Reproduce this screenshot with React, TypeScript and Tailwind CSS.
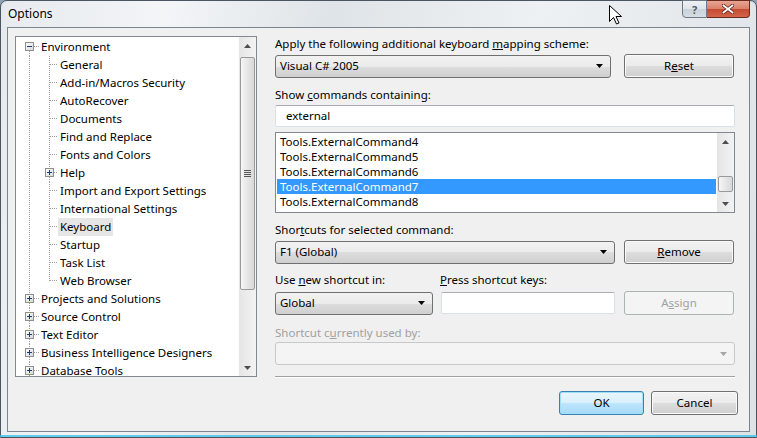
import React from "react";

const FONT = "font-['Noto_Sans',sans-serif]";

const Arrow = ({ dir, color = "#000" }: { dir: "up" | "down"; color?: string }) => (
  <svg width="7" height="4" viewBox="0 0 7 4" className="block">
    {dir === "down" ? (
      <path d="M0 0h7L3.5 4z" fill={color} />
    ) : (
      <path d="M0 4h7L3.5 0z" fill={color} />
    )}
  </svg>
);

const ComboBox = ({
  value,
  className,
  disabled,
}: {
  value?: string;
  className: string;
  disabled?: boolean;
}) => (
  <div
    className={`${className} h-[23px] rounded-[3px] border flex items-center justify-between pl-[4px] pr-[7px] ${
      disabled
        ? "border-[#c6c8ca] bg-[#f4f4f4]"
        : "border-[#707070] bg-[linear-gradient(to_bottom,#f2f2f2_0%,#ebebeb_50%,#dddddd_50%,#cfcfcf_100%)]"
    }`}
  >
    <span className="leading-none">{value}</span>
    <Arrow dir="down" color={disabled ? "#a6a6a6" : "#000"} />
  </div>
);

const Button = ({
  children,
  className,
  disabled,
  primary,
}: {
  children: React.ReactNode;
  className: string;
  disabled?: boolean;
  primary?: boolean;
}) => (
  <div
    className={`${className} h-[24px] rounded-[3px] border flex items-center justify-center ${
      disabled
        ? "border-[#adb2b5] bg-[#f4f4f4] text-[#a0a0a0]"
        : primary
        ? "border-[#3c7fb1] bg-[linear-gradient(to_bottom,#eaf6fd_0%,#d9f0fc_50%,#bee6fd_50%,#a7d9f5_100%)] shadow-[inset_0_0_0_1px_#9ee0fb]"
        : "border-[#707070] bg-[linear-gradient(to_bottom,#f2f2f2_0%,#ebebeb_50%,#dddddd_50%,#cfcfcf_100%)] shadow-[inset_0_0_0_1px_#fbfbfb]"
    }`}
  >
    {children}
  </div>
);

const TextBox = ({ value, className }: { value?: string; className: string }) => (
  <div
    className={`${className} h-[22px] rounded-[2px] border border-[#dbdfe6] border-t-[#abadb3] bg-white flex items-center pl-[10px]`}
  >
    {value}
  </div>
);

const ScrollBar = ({ thumbTop, thumbHeight, grip }: { thumbTop: number; thumbHeight: number; grip?: boolean }) => (
  <div className="w-[17px] h-full flex flex-col bg-[linear-gradient(to_right,#e5e5e5,#f3f3f3)]">
    <div className="h-[17px] flex items-center justify-center">
      <Arrow dir="up" color="#4d4d4d" />
    </div>
    <div className="flex-1 flex flex-col">
      <div style={{ height: thumbTop }} />
      <div
        className="mx-[1px] rounded-[2px] border border-[#9a9a9a] bg-[linear-gradient(to_right,#f5f5f5,#e6e6e6_50%,#d9d9d9)] flex items-center justify-center"
        style={{ height: thumbHeight }}
      >
        {grip && (
          <div className="flex flex-col gap-[1px]">
            <div className="w-[7px] h-[1px] bg-[#555]" />
            <div className="w-[7px] h-[1px] bg-[#555]" />
            <div className="w-[7px] h-[1px] bg-[#555]" />
            <div className="w-[7px] h-[1px] bg-[#555]" />
          </div>
        )}
      </div>
    </div>
    <div className="h-[17px] flex items-center justify-center">
      <Arrow dir="down" color="#4d4d4d" />
    </div>
  </div>
);

type Node = {
  label: string;
  level: 0 | 1;
  expander?: "plus" | "minus";
  first?: boolean;
  lastChild?: boolean;
  selected?: boolean;
};

const nodes: Node[] = [
  { label: "Environment", level: 0, expander: "minus", first: true },
  { label: "General", level: 1 },
  { label: "Add-in/Macros Security", level: 1 },
  { label: "AutoRecover", level: 1 },
  { label: "Documents", level: 1 },
  { label: "Find and Replace", level: 1 },
  { label: "Fonts and Colors", level: 1 },
  { label: "Help", level: 1, expander: "plus" },
  { label: "Import and Export Settings", level: 1 },
  { label: "International Settings", level: 1 },
  { label: "Keyboard", level: 1, selected: true },
  { label: "Startup", level: 1 },
  { label: "Task List", level: 1 },
  { label: "Web Browser", level: 1, lastChild: true },
  { label: "Projects and Solutions", level: 0, expander: "plus" },
  { label: "Source Control", level: 0, expander: "plus" },
  { label: "Text Editor", level: 0, expander: "plus" },
  { label: "Business Intelligence Designers", level: 0, expander: "plus" },
  { label: "Database Tools", level: 0, expander: "plus" },
];

const Expander = ({ x, kind }: { x: number; kind: "plus" | "minus" }) => (
  <g>
    <rect x={x + 0.5} y={4.5} width={8} height={8} fill="url(#exp)" stroke="#8f8f8f" />
    <path d={`M${x + 2} 8.5h5`} stroke="#1d3a73" />
    {kind === "plus" && <path d={`M${x + 4.5} 6v5`} stroke="#1d3a73" />}
  </g>
);

const TreeRow = ({ node }: { node: Node }) => {
  const gutter = node.level === 0 ? 23 : 42;
  const L0 = 13.5;
  const L1 = 33.5;
  return (
    <div className="h-[18px] flex items-center shrink-0">
      <svg width={gutter} height={18} className="block shrink-0" shapeRendering="crispEdges">
        <defs>
          <linearGradient id="exp" x1="0" y1="0" x2="1" y2="1">
            <stop offset="0" stopColor="#ffffff" />
            <stop offset="1" stopColor="#d6d6d6" />
          </linearGradient>
        </defs>
        {node.level === 0 ? (
          <>
            {!node.first && <line x1={L0} y1={0} x2={L0} y2={4} stroke="#a0a0a0" strokeDasharray="1 1" />}
            <line x1={L0} y1={13} x2={L0} y2={18} stroke="#a0a0a0" strokeDasharray="1 1" />
            <line x1={18} y1={8.5} x2={23} y2={8.5} stroke="#a0a0a0" strokeDasharray="1 1" />
            {node.expander && <Expander x={9} kind={node.expander} />}
          </>
        ) : (
          <>
            <line x1={L0} y1={0} x2={L0} y2={18} stroke="#a0a0a0" strokeDasharray="1 1" />
            {node.expander ? (
              <>
                <line x1={L1} y1={0} x2={L1} y2={4} stroke="#a0a0a0" strokeDasharray="1 1" />
                <line x1={L1} y1={13} x2={L1} y2={18} stroke="#a0a0a0" strokeDasharray="1 1" />
                <line x1={38} y1={8.5} x2={42} y2={8.5} stroke="#a0a0a0" strokeDasharray="1 1" />
                <Expander x={29} kind={node.expander} />
              </>
            ) : (
              <>
                <line x1={L1} y1={0} x2={L1} y2={node.lastChild ? 9 : 18} stroke="#a0a0a0" strokeDasharray="1 1" />
                <line x1={L1} y1={8.5} x2={42} y2={8.5} stroke="#a0a0a0" strokeDasharray="1 1" />
              </>
            )}
          </>
        )}
      </svg>
      <span className={`px-[2px] h-[18px] leading-[18px] whitespace-nowrap ${node.selected ? "bg-[#e6e6e6]" : ""}`}>
        {node.label}
      </span>
    </div>
  );
};

const commands = [
  "Tools.ExternalCommand4",
  "Tools.ExternalCommand5",
  "Tools.ExternalCommand6",
  "Tools.ExternalCommand7",
  "Tools.ExternalCommand8",
];

export default function App() {
  return (
    <div className={`w-[757px] h-[438px] relative overflow-hidden bg-[#8fa3b5] ${FONT} text-[11.5px] text-black`}>
      <div className="h-full flex flex-col rounded-t-[7px] border border-[#4b5561] bg-[linear-gradient(100deg,#e6eaee_0%,#f3f5f7_20%,#dfe4e8_40%,#eef1f3_65%,#dde2e7_100%)]">
        {/* title bar */}
        <div className="h-[26px] flex items-start justify-between pl-[7px] pr-[6px]">
          <span className="mt-[5px] leading-[16px] text-[12px] [text-shadow:0_0_6px_#ffffff]">Options</span>
          <div className="flex -mt-[1px]">
            <div className="w-[25px] h-[18px] rounded-bl-[4px] border border-[#6d7a86] bg-[linear-gradient(to_bottom,#eef1f4_0%,#dfe5ea_50%,#c9d2da_50%,#d6dde3_100%)] flex items-center justify-center text-[11px] text-[#505a64] font-bold leading-none">
              ?
            </div>
            <div className="w-[43px] h-[18px] rounded-br-[4px] border border-l-0 border-[#6b2a1e] bg-[linear-gradient(to_bottom,#e8a493_0%,#d9806a_50%,#c44a2f_50%,#d2654a_100%)] flex items-center justify-center">
              <svg width="12" height="10" viewBox="0 0 12 10">
                <path d="M1.5 1.5L10.5 8.5M10.5 1.5L1.5 8.5" stroke="#5a2015" strokeWidth="3.4" strokeLinecap="square" />
                <path d="M1.5 1.5L10.5 8.5M10.5 1.5L1.5 8.5" stroke="#ffffff" strokeWidth="1.8" strokeLinecap="square" />
              </svg>
            </div>
          </div>
        </div>

        {/* client area */}
        <div className="flex-1 mx-[6px] mb-[5px] border border-[#7a8590] bg-[#f0f0f0] flex flex-col pt-[8px] pl-[7px]">
          <div className="flex items-start">
            {/* tree */}
            <div className="w-[242px] h-[341px] border border-[#828790] bg-white flex overflow-hidden">
              <div className="flex-1 flex flex-col pt-[1px] overflow-hidden">
                {nodes.map((n) => (
                  <TreeRow key={n.label} node={n} />
                ))}
              </div>
              <ScrollBar thumbTop={3} thumbHeight={233} grip />
            </div>

            {/* right panel */}
            <div className="ml-[18px] w-[460px] flex flex-col">
              <div className="h-[16px] leading-[16px]">
                Apply the following additional keyboard <u>m</u>apping scheme:
              </div>
              <div className="mt-[2px] h-[24px] flex items-center">
                <ComboBox value="Visual C# 2005" className="w-[336px]" />
                <Button className="ml-[13px] w-[110px]">
                  <span>
                    R<u>e</u>set
                  </span>
                </Button>
              </div>

              <div className="mt-[9px] h-[16px] leading-[16px]">
                Show <u>c</u>ommands containing:
              </div>
              <TextBox value="external" className="mt-[2px] w-[460px]" />

              <div className="mt-[5px] h-[81px] border border-[#828790] bg-white flex">
                <div className="flex-1 flex flex-col p-[1px]">
                  {commands.map((c, i) => (
                    <div
                      key={c}
                      className={`h-[15px] leading-[15px] pl-[3px] ${i === 3 ? "bg-[#3399ff] text-white" : ""}`}
                    >
                      {c}
                    </div>
                  ))}
                </div>
                <ScrollBar thumbTop={26} thumbHeight={16} />
              </div>

              <div className="mt-[9px] h-[16px] leading-[16px]">
                Shor<u>t</u>cuts for selected command:
              </div>
              <div className="mt-[2px] h-[24px] flex items-center">
                <ComboBox value="F1 (Global)" className="w-[340px]" />
                <Button className="ml-[9px] w-[110px]">
                  <span>
                    <u>R</u>emove
                  </span>
                </Button>
              </div>

              <div className="mt-[8px] h-[16px] leading-[16px] flex">
                <span className="w-[165px]">
                  Use <u>n</u>ew shortcut in:
                </span>
                <span>
                  <u>P</u>ress shortcut keys:
                </span>
              </div>
              <div className="mt-[3px] h-[24px] flex items-center">
                <ComboBox value="Global" className="w-[158px]" />
                <TextBox className="ml-[8px] w-[174px]" />
                <Button disabled className="ml-[9px] w-[110px]">
                  <span>
                    A<u>s</u>sign
                  </span>
                </Button>
              </div>

              <div className="mt-[10px] h-[16px] leading-[16px] text-[#a0a0a0]">
                Shortcut c<u>u</u>rrently used by:
              </div>
              <ComboBox disabled className="mt-[1px] w-[460px]" />

              <div className="mt-[11px] h-[1px] bg-[#a0a0a0] border-b border-white box-content" />
            </div>
          </div>

          {/* dialog buttons */}
          <div className="mt-[13px] flex justify-end gap-[7px] pr-[11px]">
            <Button primary className="w-[85px]">
              OK
            </Button>
            <Button className="w-[87px]">Cancel</Button>
          </div>
        </div>
      </div>
      <div className="absolute left-0 right-0 bottom-[1px] h-[2px] bg-[#3cc3e6] opacity-80" />

      {/* mouse pointer */}
      <svg className="absolute left-[609px] top-[5px]" width="13" height="20" viewBox="0 0 13 20">
        <path
          d="M0.5 0.5V16.5L4.5 12.5L7.5 19L10 18L7 11.5H12.5Z"
          fill="#ffffff"
          stroke="#000000"
          strokeLinejoin="round"
        />
      </svg>
    </div>
  );
}
